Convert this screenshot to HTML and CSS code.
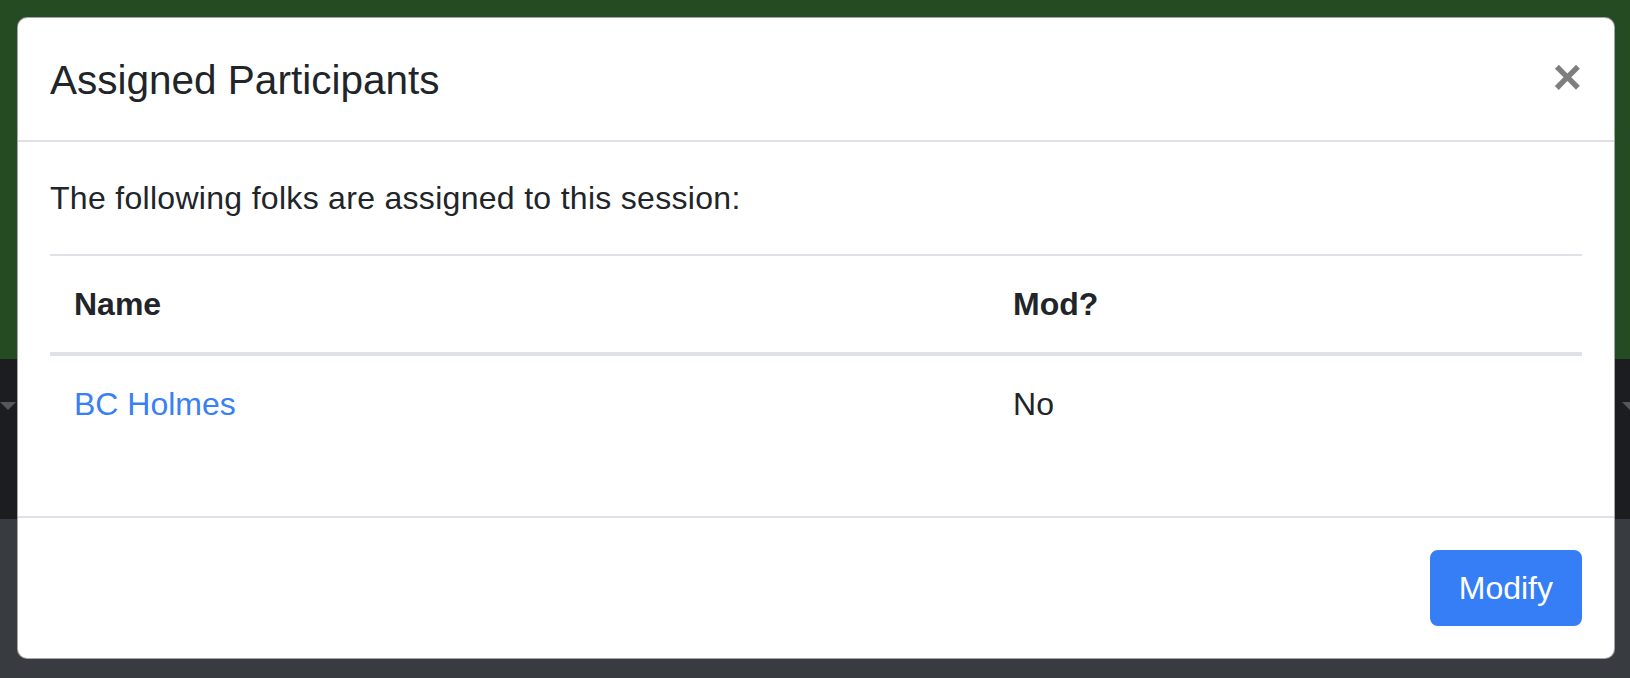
FILE: index.html
```html
<!DOCTYPE html>
<html lang="en">
<head>
<meta charset="utf-8">
<title>Assigned Participants</title>
<link rel="stylesheet" href="styles.css">
</head>
<body>
<div class="page">
  <div class="band band-green"></div>
  <div class="band band-dark">
    <span class="caret caret-left"></span>
    <span class="caret caret-right"></span>
  </div>
  <div class="band band-gray"></div>
</div>
<div class="modal">
  <div class="modal-header">
    <h5 class="modal-title">Assigned Participants</h5>
    <button class="close" type="button" aria-label="Close">×</button>
  </div>
  <div class="modal-body">
    <p class="lead-text">The following folks are assigned to this session:</p>
    <table class="table">
      <thead>
        <tr><th class="col-name">Name</th><th class="col-mod">Mod?</th></tr>
      </thead>
      <tbody>
        <tr><td><a href="#" class="person">BC Holmes</a></td><td>No</td></tr>
      </tbody>
    </table>
  </div>
  <div class="modal-footer">
    <button class="btn btn-primary" type="button">Modify</button>
  </div>
</div>
</body>
</html>
```

FILE: styles.css
```css
* { box-sizing: border-box; }
html, body { margin: 0; padding: 0; }
body {
  width: 1630px;
  height: 678px;
  overflow: hidden;
  font-family: "Liberation Sans", Arial, sans-serif;
  font-size: 32px;
  line-height: 1.5;
  color: #212529;
  position: relative;
}
.page {
  display: flex;
  flex-direction: column;
  height: 678px;
}
.band-green { height: 359px; background: #244b21; }
.band-dark { height: 160px; background: #1b1d20; position: relative; }
.band-gray { flex: 1; background: #383b40; }
.caret {
  position: absolute;
  top: 43px;
  width: 0; height: 0;
  border-left: 8px solid transparent;
  border-right: 8px solid transparent;
  border-top: 8px solid #55575b;
}
.caret-left { left: 0; }
.caret-right { left: 1622px; }

.modal {
  position: absolute;
  left: 17px;
  top: 17px;
  width: 1598px;
  background: #fff;
  border: 1px solid rgba(0,0,0,.35);
  border-radius: 10px;
  display: flex;
  flex-direction: column;
}
.modal-header {
  display: flex;
  align-items: flex-start;
  padding: 32px;
  border-bottom: 2px solid #dee2e6;
  height: 124px;
}
.modal-title {
  margin: 0;
  font-size: 40.5px;
  font-weight: 400;
  line-height: 60px;
}
.close {
  margin: -32px -32px -32px auto;
  padding: 32px;
  background: transparent;
  border: 0;
  font-family: "Liberation Sans", Arial, sans-serif;
  font-size: 50px;
  font-weight: 700;
  line-height: 1;
  color: #000;
  opacity: .5;
  position: relative;
  top: 2px;
}
.modal-body { padding: 32px; }
.lead-text { margin: 0 0 32px; letter-spacing: .3px; }
.table {
  width: 100%;
  border-collapse: collapse;
  margin-bottom: 32px;
}
.table th, .table td {
  padding: 24px;
  text-align: left;
  vertical-align: top;
  border-top: 2px solid #dee2e6;
}
.table th { font-weight: 700; }
.table thead th { border-bottom: 4px solid #dee2e6; }
.col-name { width: 61.3%; }
.person { color: #3a80f5; text-decoration: none; }
.modal-footer {
  display: flex;
  justify-content: flex-end;
  padding: 24px;
  border-top: 2px solid #dee2e6;
}
.btn {
  margin: 8px;
  padding: 12px 27px;
  border: 2px solid #367ef5;
  border-radius: 8px;
  background: #367ef5;
  color: #fff;
  font-family: "Liberation Sans", Arial, sans-serif;
  font-size: 32px;
  line-height: 48px;
}
```
